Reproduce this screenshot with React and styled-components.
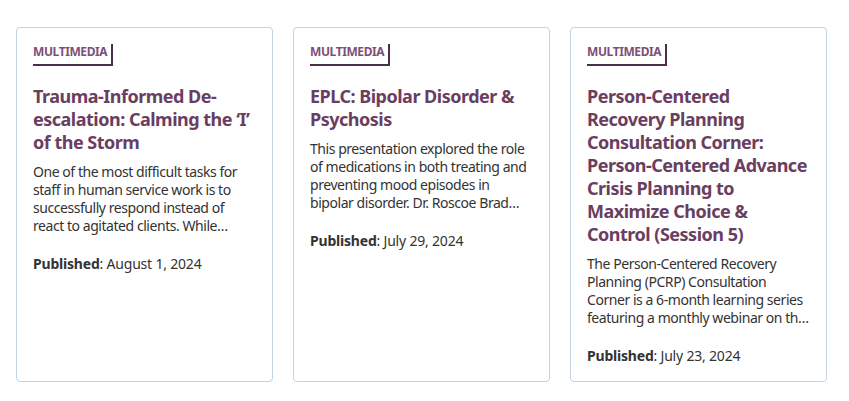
import React from "react";
import styled, { createGlobalStyle } from "styled-components";

const GlobalStyle = createGlobalStyle`
  body {
    margin: 0;
    background: #ffffff;
    font-family: "Noto Sans", "Open Sans", sans-serif;
  }
`;

const Grid = styled.div`
  display: grid;
  grid-template-columns: repeat(3, 257px);
  column-gap: 20px;
  padding: 27px 16px 20px 16px;
  align-items: stretch;
`;

const Card = styled.article`
  display: flex;
  flex-direction: column;
  border: 1px solid #c3d3e2;
  border-radius: 4px;
  padding: 16px 16px 16px 16px;
`;

const Tag = styled.span`
  align-self: flex-start;
  font-size: 12px;
  font-weight: 700;
  line-height: 14px;
  color: #7d4f79;
  letter-spacing: -0.4px;
  padding: 1px 4px 5px 0;
  border-right: 2px solid #4b2f49;
  border-bottom: 2px solid #4b2f49;
`;

const Title = styled.h3`
  margin: 19px 0 9px 0;
  font-size: 18px;
  line-height: 23px;
  font-weight: 700;
  letter-spacing: -0.5px;
  color: #6a3e60;
`;

const Summary = styled.p`
  margin: 0;
  font-size: 14px;
  line-height: 18px;
  letter-spacing: -0.45px;
  color: #333333;
`;

const Published = styled.p`
  margin: 20px 0 0 0;
  font-size: 14px;
  line-height: 18px;
  letter-spacing: -0.2px;
  color: #333333;

  strong {
    font-weight: 700;
  }
`;

const items = [
  {
    title: "Trauma-Informed De-escalation: Calming the \u2018I\u2019 of the Storm",
    summary:
      "One of the most difficult tasks for staff in human service work is to successfully respond instead of react to agitated clients. While\u2026",
    date: "August 1, 2024",
  },
  {
    title: "EPLC: Bipolar Disorder & Psychosis",
    summary:
      "This presentation explored the role of medications in both treating and preventing mood episodes in bipolar disorder. Dr. Roscoe Brad\u2026",
    date: "July 29, 2024",
  },
  {
    title:
      "Person-Centered Recovery Planning Consultation Corner: Person-Centered Advance Crisis Planning to Maximize Choice & Control (Session 5)",
    summary:
      "The Person-Centered Recovery Planning (PCRP) Consultation Corner is a 6-month learning series featuring a monthly webinar on th\u2026",
    date: "July 23, 2024",
  },
];

const App = () => {
  return (
    <>
      <GlobalStyle />
      <Grid>
        {items.map(item => (
          <Card key={item.title}>
            <Tag>MULTIMEDIA</Tag>
            <Title>{item.title}</Title>
            <Summary>{item.summary}</Summary>
            <Published>
              <strong>Published</strong>: {item.date}
            </Published>
          </Card>
        ))}
      </Grid>
    </>
  );
};

export default App;
